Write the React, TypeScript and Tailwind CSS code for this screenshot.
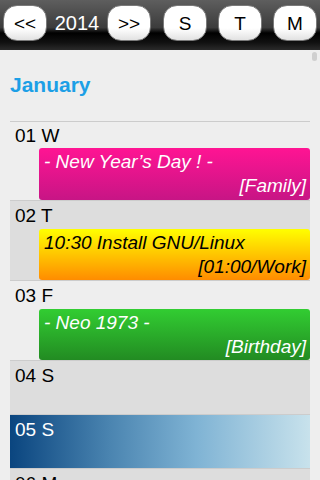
import React from "react";

interface CalEvent {
  title: string;
  meta: string;
  box: string;
  text: string;
}

interface Day {
  label: string;
  row: string;
  labelColor: string;
  event?: CalEvent;
}

const days: Day[] = [
  {
    label: "01 W",
    row: "bg-[#eeeeee]",
    labelColor: "text-black",
    event: {
      title: "- New Year’s Day ! -",
      meta: "[Family]",
      box: "bg-[linear-gradient(#ff1493,#c71585)]",
      text: "text-white",
    },
  },
  {
    label: "02 T",
    row: "bg-[#dddddd]",
    labelColor: "text-black",
    event: {
      title: "10:30 Install GNU/Linux",
      meta: "[01:00/Work]",
      box: "bg-[linear-gradient(#ffff00,#ff8c00)]",
      text: "text-black",
    },
  },
  {
    label: "03 F",
    row: "bg-[#eeeeee]",
    labelColor: "text-black",
    event: {
      title: "- Neo 1973 -",
      meta: "[Birthday]",
      box: "bg-[linear-gradient(#32cd32,#228b22)]",
      text: "text-white",
    },
  },
  { label: "04 S", row: "bg-[#dddddd]", labelColor: "text-black" },
  {
    label: "05 S",
    row: "bg-[linear-gradient(to_right,#0a457f,#4a84b0_33%,#7fb3d4_62%,#c8e2ec)]",
    labelColor: "text-white",
  },
  { label: "06 M", row: "bg-[#dddddd]", labelColor: "text-black" },
];

const NavButton = ({ children, className }: { children: React.ReactNode; className?: string }) => (
  <button
    className={
      "h-[36px] w-[44px] rounded-[14px] border border-[#7a7a7a] bg-[linear-gradient(#ffffff,#ffffff_65%,#e2e2e2)] text-[19px] leading-none text-black flex items-center justify-center " +
      (className ?? "")
    }
  >
    {children}
  </button>
);

export default function App() {
  return (
    <div className="relative w-[320px] h-[480px] overflow-hidden bg-[#eeeeee] font-['Liberation_Sans',Arial,sans-serif]">
      {/* HEADER */}
      <div className="h-[50px] flex items-start pt-[5px] pl-[3px] bg-[linear-gradient(#5e5e5e,#3c3c3c_55%,#000000_66%,#111111_85%,#2a2a2a)]">
        <NavButton>&lt;&lt;</NavButton>
        <span className="w-[60px] h-[36px] flex items-center justify-center text-white text-[20px]">2014</span>
        <NavButton>&gt;&gt;</NavButton>
        <NavButton className="ml-[12px]">S</NavButton>
        <NavButton className="ml-[11px]">T</NavButton>
        <NavButton className="ml-[11px]">M</NavButton>
      </div>

      {/* scroll indicator */}
      <div className="absolute left-[312px] top-[52px] w-[5px] h-[9px] rounded-full bg-[#cfcfcf]" />

      <div className="px-[10px]">
        <h1 className="mt-[23px] mb-[24px] text-[21px] leading-[24px] font-bold text-[#1c9fe6]">January</h1>

        <ul className="border-t border-[#cccccc]">
          {days.map((d, i) => (
            <li
              key={d.label}
              className={
                d.row +
                (i > 0 ? " border-t border-[#cccccc]" : "") +
                (d.event ? "" : " min-h-[54px]")
              }
            >
              <div
                className={
                  "pl-[5px] text-[19px] leading-[24px] " +
                  (i === 0 ? "pt-[2px] " : "pt-[3px] pb-[1px] ") +
                  d.labelColor
                }
              >
                {d.label}
              </div>
              {d.event && (
                <div
                  className={
                    "ml-[29px] rounded-[3px] pt-[2px] pl-[5px] pr-[4px] italic text-[19px] leading-[24px] " +
                    (i === 0 ? "h-[52px] " : "h-[51px] ") +
                    d.event.box +
                    " " +
                    d.event.text
                  }
                >
                  <p>{d.event.title}</p>
                  <p className="text-right">{d.event.meta}</p>
                </div>
              )}
            </li>
          ))}
        </ul>
      </div>
    </div>
  );
}
